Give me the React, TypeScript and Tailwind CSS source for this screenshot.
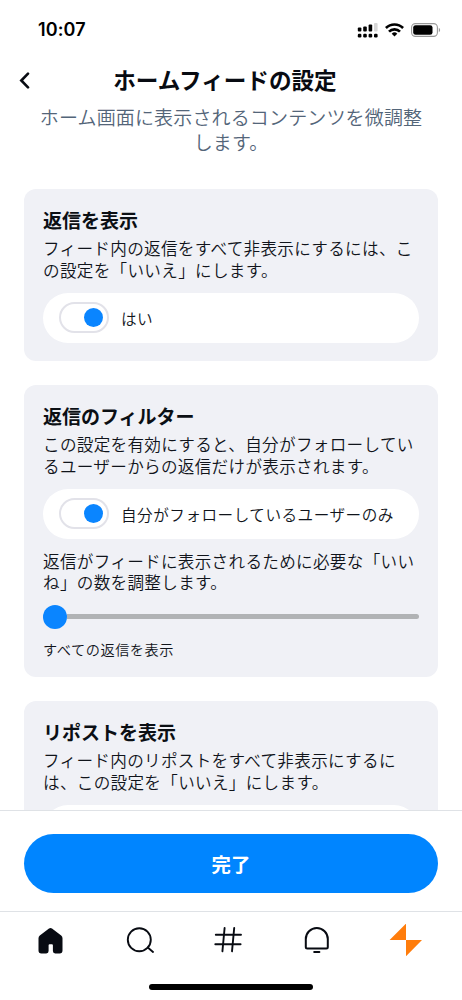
import { useState } from 'react';
import type { ReactNode } from 'react';
import { clsx } from 'clsx';

interface PreferenceCardProps {
  title: string;
  description: string;
  children: ReactNode;
}

function PreferenceCard({ title, description, children }: PreferenceCardProps) {
  return (
    <section className="rounded-[12px] bg-[#f0f1f6] px-[19px] pt-[18px] pb-[18.5px]">
      <h2 className="text-[19px] leading-[25px] font-bold text-[#0b0f14]">{title}</h2>
      <p className="mt-[6px] text-[16.6px] leading-[21.5px] tracking-[0.3px]">{description}</p>
      {children}
    </section>
  );
}

interface ToggleRowProps {
  label?: string;
  checked: boolean;
  onChange: (checked: boolean) => void;
}

function ToggleRow({ label, checked, onChange }: ToggleRowProps) {
  return (
    <button
      type="button"
      role="switch"
      aria-checked={checked}
      onClick={() => onChange(!checked)}
      className="mt-[11.5px] flex h-[50px] w-full items-center rounded-full bg-white pl-[16px] text-left"
    >
      <span
        className={clsx(
          'flex h-[31px] w-[50px] shrink-0 items-center rounded-full border-2 border-[#e2e2e9] px-[4px]',
          checked ? 'justify-end' : 'justify-start',
        )}
      >
        <span className={clsx('size-[19px] rounded-full', checked ? 'bg-[#0a85ff]' : 'bg-[#b0b2b6]')} />
      </span>
      {label && (
        <span className="ml-[12px] text-[15.6px] leading-5 tracking-[0.5px] whitespace-nowrap">{label}</span>
      )}
    </button>
  );
}

function StatusBar() {
  return (
    <div className="flex h-[60px] shrink-0 items-center justify-between pr-[21.5px] pl-[38px]">
      <span className="font-[Inter] text-[18px] leading-none font-semibold tracking-[0.1px] text-black">10:07</span>
      <div className="flex items-center gap-[7px]">
        {/* Sinal dual SIM */}
        <svg width="21" height="15" viewBox="0 0 21 15">
          <rect x="0.8" y="4.5" width="3.6" height="4" rx="1" />
          <rect x="6.2" y="3.5" width="3.6" height="5" rx="1" />
          <rect x="11.6" y="1.5" width="3.6" height="7" rx="1" />
          <rect x="17" y="0" width="3.6" height="8.5" rx="1" fill="#d6d6d6" />
          <rect x="0.8" y="10.7" width="3.6" height="3.8" rx="1.2" />
          <rect x="6.2" y="10.7" width="3.6" height="3.8" rx="1.2" />
          <rect x="11.6" y="10.7" width="3.6" height="3.8" rx="1.2" />
          <rect x="17" y="10.7" width="3.6" height="3.8" rx="1.2" />
        </svg>
        <svg width="19" height="14" viewBox="0 0 19 14" fill="none" stroke="black" strokeWidth="2.7">
          <path d="M0.9 5 A12.3 12.3 0 0 1 18.1 5" />
          <path d="M4 8.6 A7.8 7.8 0 0 1 15 8.6" />
          <path d="M6.7 10.7 A4 4 0 0 1 12.3 10.7 L9.5 13.6 Z" fill="black" stroke="none" />
        </svg>
        <svg width="30" height="14" viewBox="0 0 30 14">
          <rect x="0.6" y="0.6" width="25.8" height="12.8" rx="3.8" fill="none" stroke="#999" strokeWidth="1.1" />
          <rect x="2.2" y="2.2" width="19.3" height="9.6" rx="2.4" />
          <path d="M27.8 4.8 C29.6 5.5 29.6 8.5 27.8 9.2 Z" fill="#999" />
        </svg>
      </div>
    </div>
  );
}

function NavBar() {
  return (
    <nav className="h-[89px] shrink-0 border-t border-[#dfe2e6] bg-white">
      <div className="flex h-[56px] items-center pl-[38px]">
        <svg className="mr-[63px]" width="25" height="27" viewBox="0 0 25 27" fill="#080b12">
          <path d="M11 1.6 Q12.5 0.2 14 1.6 L23.2 8.6 Q24.5 9.7 24.5 11.3 V23.5 Q24.5 26.4 21.6 26.4 H17.2 Q14.9 26.4 14.9 24 V18.2 Q14.9 17.2 13.9 17.2 H11.6 Q10.6 17.2 10.6 18.2 V24 Q10.6 26.4 8.3 26.4 H3.4 Q0.5 26.4 0.5 23.5 V11.3 Q0.5 9.7 1.8 8.6 Z" />
        </svg>
        <svg className="mr-[60px]" width="28" height="27" viewBox="0 0 28 27" fill="none" stroke="#080b12" strokeWidth="1.9" strokeLinecap="round">
          <circle cx="13.3" cy="12.7" r="11.5" />
          <path d="M21.8 20.6 L27 24.9" />
        </svg>
        <svg className="mr-[61px]" width="29" height="26" viewBox="0 0 29 26" fill="none" stroke="#080b12" strokeWidth="1.9" strokeLinecap="round">
          <path d="M10.6 1 L8.4 24.3 M20.2 1 L18 24.3 M1.8 7.8 H27 M1.3 17.3 H26.6" />
        </svg>
        <svg className="mr-[60px]" width="25" height="27" viewBox="0 0 25 27" fill="none" stroke="#080b12" strokeWidth="2">
          <path d="M1.8 12 A11 11 0 0 1 23.8 12 V20 Q23.8 21.5 22.3 21.5 H3.3 Q1.8 21.5 1.8 20 Z" />
          <path d="M10.2 24.9 H15.4" strokeLinecap="round" />
        </svg>
        <svg width="33" height="33" viewBox="0 0 33 33" fill="#ff7d0c">
          <path d="M17 -0.4 V16 H0.6 Z M17 16 H33 L17 32.2 Z" />
        </svg>
      </div>
      <div className="mx-auto mt-[16px] h-[6px] w-[164px] rounded-full bg-black" />
    </nav>
  );
}

export default function App() {
  const [showReplies, setShowReplies] = useState(true);
  const [followedOnly, setFollowedOnly] = useState(true);
  const [showReposts, setShowReposts] = useState(true);

  return (
    <div className="flex h-[1000px] w-[462px] flex-col overflow-hidden bg-white font-['Noto_Sans_CJK_JP',sans-serif] font-[350] text-[#10141b]">
      <StatusBar />

      <header className="h-[129px] shrink-0">
        <div className="flex h-[40px] items-center pr-[42px] pl-[18px]">
          <svg width="12" height="18" viewBox="0 0 12 18" fill="none" stroke="#080b12" strokeWidth="2.6" strokeLinecap="round">
            <path d="M10 2.6 L3.3 9.5 L10 16.4" />
          </svg>
          <h1 className="flex-1 text-center text-[22.6px] leading-[30px] font-bold text-[#080b12]">ホームフィードの設定</h1>
        </div>
        <p className="mx-auto mt-[5px] w-[390px] text-center text-[19px] leading-[24.5px] tracking-[0.15px] text-[#536579]">
          ホーム画面に表示されるコンテンツを微調整します。
        </p>
      </header>

      <main className="flex min-h-0 flex-1 flex-col gap-[24px] overflow-hidden px-[24px] *:shrink-0">
        <PreferenceCard
          title="返信を表示"
          description="フィード内の返信をすべて非表示にするには、この設定を「いいえ」にします。"
        >
          <ToggleRow label={showReplies ? 'はい' : 'いいえ'} checked={showReplies} onChange={setShowReplies} />
        </PreferenceCard>

        <PreferenceCard
          title="返信のフィルター"
          description="この設定を有効にすると、自分がフォローしているユーザーからの返信だけが表示されます。"
        >
          <ToggleRow label="自分がフォローしているユーザーのみ" checked={followedOnly} onChange={setFollowedOnly} />
          <p className="mt-[12px] text-[16.6px] leading-[21.5px] tracking-[0.3px]">
            返信がフィードに表示されるために必要な「いいね」の数を調整します。
          </p>
          <div className="mt-[11px] flex h-[24px] items-center">
            <span className="size-[24px] shrink-0 rounded-full bg-[#0a85ff]" />
            <span className="h-[5px] flex-1 rounded-r-full bg-[#b1b3b5]" />
          </div>
          <p className="mt-[11.5px] text-[14.2px] leading-[18.5px] tracking-[0.55px]">すべての返信を表示</p>
        </PreferenceCard>

        <PreferenceCard
          title="リポストを表示"
          description="フィード内のリポストをすべて非表示にするには、この設定を「いいえ」にします。"
        >
          <ToggleRow checked={showReposts} onChange={setShowReposts} />
        </PreferenceCard>
      </main>

      <div className="h-[101px] shrink-0 border-t border-[#dfe2e6] bg-white px-[24px] pt-[23px]">
        <button
          type="button"
          className="flex h-[59px] w-full items-center justify-center rounded-full bg-[#0085ff] text-[19.4px] font-bold text-white"
        >
          完了
        </button>
      </div>

      <NavBar />
    </div>
  );
}
